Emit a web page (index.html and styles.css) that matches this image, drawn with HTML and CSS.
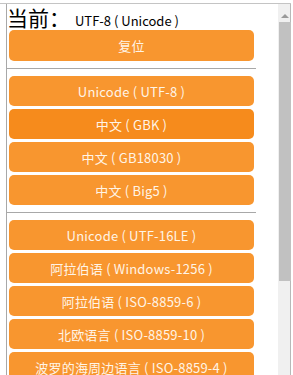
FILE: index.html
```html
<!DOCTYPE html>
<html lang="zh-CN">
  <head>
    <meta charset="UTF-8" />
    <meta name="viewport" content="width=device-width, initial-scale=1.0" />
    <title>编码</title>
    <link rel="stylesheet" href="styles.css">
  </head>
  <body>
    <div class="win">
      <div class="panel">
        <div class="panel__head">
          <span class="panel__label">当前：</span><span class="panel__value">UTF-8 ( Unicode )</span>
        </div>
        <div class="group">
          <button class="enc__btn enc__btn--reset">复位</button>
        </div>
        <hr class="sep" />
        <div class="group">
          <button class="enc__btn">Unicode ( UTF-8 )</button>
          <button class="enc__btn enc__btn--on">中文 ( GBK )</button>
          <button class="enc__btn">中文 ( GB18030 )</button>
          <button class="enc__btn">中文 ( Big5 )</button>
        </div>
        <hr class="sep" />
        <div class="group">
          <button class="enc__btn">Unicode ( UTF-16LE )</button>
          <button class="enc__btn">阿拉伯语 ( Windows-1256 )</button>
          <button class="enc__btn">阿拉伯语 ( ISO-8859-6 )</button>
          <button class="enc__btn">北欧语言 ( ISO-8859-10 )</button>
          <button class="enc__btn">波罗的海周边语言 ( ISO-8859-4 )</button>
        </div>
      </div>
      <div class="scroll">
        <div class="scroll__up"></div>
        <div class="scroll__thumb"></div>
      </div>
    </div>
  </body>
</html>
```

FILE: styles.css
```css
*,
*::before,
*::after {
  box-sizing: border-box;
  padding: 0;
  margin: 0;
}

:root {
  --orange: #f8962f;
  --orange-on: #f68b1c;
  --line: #a8a8a8;
}
html,
body {
  height: 100%;
  overflow: hidden;
  background: #fff;
}
body {
  font-family: "Noto Sans CJK SC", "Noto Sans", sans-serif;
}
.win {
  display: flex;
  width: 291px;
  height: 372px;
  margin-top: 3px;
  border-top: 1px solid #c4c4c4;
}
.panel {
  flex: 1;
  margin-left: 6px;
  border-left: 1px solid var(--line);
  padding: 0 22px 0 2px;
}
.panel__head {
  display: flex;
  align-items: baseline;
  height: 26px;
  margin-left: -2px;
  white-space: nowrap;
  color: #000;
}
.panel__label {
  font-size: 21px;
  line-height: 26px;
}
.panel__value {
  font-size: 13px;
  line-height: 26px;
  margin-left: 5px;
}
.group {
  display: flex;
  flex-direction: column;
  gap: 3px;
}
.sep {
  border: none;
  border-top: 1px solid var(--line);
  margin: 6px 0 7px -2px;
  width: 249px;
}
.group + .sep {
  margin-top: 7px;
}
.enc__btn {
  border: none;
  outline: none;
  cursor: pointer;
  height: 30px;
  width: 245px;
  flex: none;
  background-color: var(--orange);
  color: #fff4e6;
  font-family: "Noto Sans CJK SC", "Noto Sans", sans-serif;
  font-size: 13px;
  font-weight: normal;
  letter-spacing: 0.2px;
  border-radius: 5px;
  white-space: nowrap;
}
.enc__btn--reset {
  height: 31px;
}
.enc__btn--on {
  background-color: var(--orange-on);
}
.scroll {
  position: relative;
  width: 14px;
  background: #f0f0f0;
  border-right: 1px solid #b8b8b8;
}
.scroll__up {
  position: absolute;
  top: 10px;
  left: 3px;
  width: 0;
  height: 0;
  border-left: 4px solid transparent;
  border-right: 4px solid transparent;
  border-bottom: 4px solid #9a9a9a;
}
.scroll__thumb {
  position: absolute;
  top: 18px;
  left: 1px;
  width: 12px;
  height: 259px;
  background: #c1c1c1;
}
```
